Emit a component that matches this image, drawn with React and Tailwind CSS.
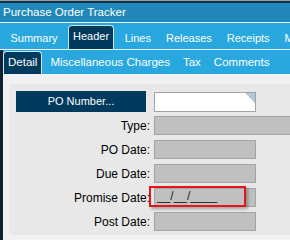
import React from 'react'

const tabs = ['Summary', 'Header', 'Lines', 'Releases', 'Receipts', 'Misc']
const subTabs = ['Detail', 'Miscellaneous Charges', 'Tax', 'Comments']

const Field = ({ label, wide, children }) => (
  <div className="flex items-center h-[19px]">
    <div className="w-[145px] shrink-0 pr-[4px] text-right text-[12px] text-black whitespace-nowrap">{label}</div>
    <div
      className={`relative h-[19px] shrink-0 bg-[#c0c0c0] border border-[#a4a4a4] ${
        wide ? 'w-[160px]' : 'w-[102px]'
      }`}
    >
      {children}
    </div>
  </div>
)

const App = () => {
  return (
    <div className="w-[290px] h-[240px] overflow-hidden bg-[#f1f1f3] font-[family-name:'Liberation_Sans',Arial,sans-serif]">
      {/* window frame */}
      <div className="h-[3px] bg-[#0b3450] border-t border-[#9a9a9a]"></div>
      <div className="h-[19px] bg-[#2089b9] pl-[3px] text-[11.5px] leading-[19px] text-white whitespace-nowrap">
        Purchase Order Tracker
      </div>
      <div className="h-[1px] bg-[#e6f4fb]"></div>

      {/* main tabs */}
      <div className="h-[26px] bg-[#29a8df] flex items-end pl-[3px] whitespace-nowrap">
        {tabs.map((t) =>
          t === 'Header' ? (
            <div
              key={t}
              className="h-[24px] mx-[3px] px-[4px] bg-[#003a5c] border border-b-0 border-[#cfe6f2] rounded-t-[4px] text-white text-[11px] leading-[20px]"
            >
              {t}
            </div>
          ) : (
            <div key={t} className="h-[24px] px-[7.5px] text-white text-[11px] leading-[26px]">
              {t}
            </div>
          )
        )}
      </div>
      <div className="h-[1px] bg-[#e6f4fb]"></div>

      {/* sub tabs */}
      <div className="h-[24px] bg-[#29a8df] flex items-end whitespace-nowrap">
        <div className="w-[3px] h-full shrink-0 bg-[#0b2233]"></div>
        <div className="flex items-end gap-[3px]">
          {subTabs.map((t) =>
            t === 'Detail' ? (
              <div
                key={t}
                className="h-[23px] px-[4px] bg-[#003a5c] border border-b-0 border-[#cfe6f2] rounded-t-[4px] text-white text-[11.5px] leading-[20px]"
              >
                {t}
              </div>
            ) : (
              <div key={t} className="h-[23px] px-[5px] text-white text-[11.5px] leading-[23px]">
                {t}
              </div>
            )
          )}
        </div>
      </div>

      {/* content */}
      <div className="flex h-[166px]">
        <div className="w-[3px] shrink-0 bg-[#0b2233]"></div>
        <div className="flex-1 min-w-0 pl-[6px] pt-[10px]">
          <div className="relative w-[300px] h-[151px] bg-[#e8e8e8] rounded-[4px] pt-[7px] flex flex-col gap-[4px]">
            <div className="flex items-center h-[21px] pl-[7px]">
              <button className="w-[130px] h-[21px] bg-[#003a5c] text-white text-[11px] shrink-0">
                PO Number...
              </button>
              <div className="relative ml-[8px] w-[102px] h-[20px] shrink-0 bg-white border border-[#a4a4a4]">
                <svg className="absolute top-0 right-0" width="10" height="10" viewBox="0 0 10 10">
                  <polygon points="0,0 10,0 10,10" fill="#b3c7df" />
                </svg>
              </div>
            </div>
            <div className="flex flex-col gap-[5px]">
              <Field label="Type:" wide />
              <Field label="PO Date:" />
              <Field label="Due Date:" />
              <div className="relative">
                <Field label="Promise Date:" />
                <div className="absolute left-[140px] top-[-2px] w-[97px] h-[21px] border-2 border-[#e8141c] shadow-[2px_2px_3px_rgba(0,0,0,0.3)] pl-[6px] text-[12px] leading-[16px] text-[#222]">
                  __/__/____
                </div>
              </div>
              <Field label="Post Date:" />
            </div>
          </div>
        </div>
      </div>
    </div>
  )
}

export default App
